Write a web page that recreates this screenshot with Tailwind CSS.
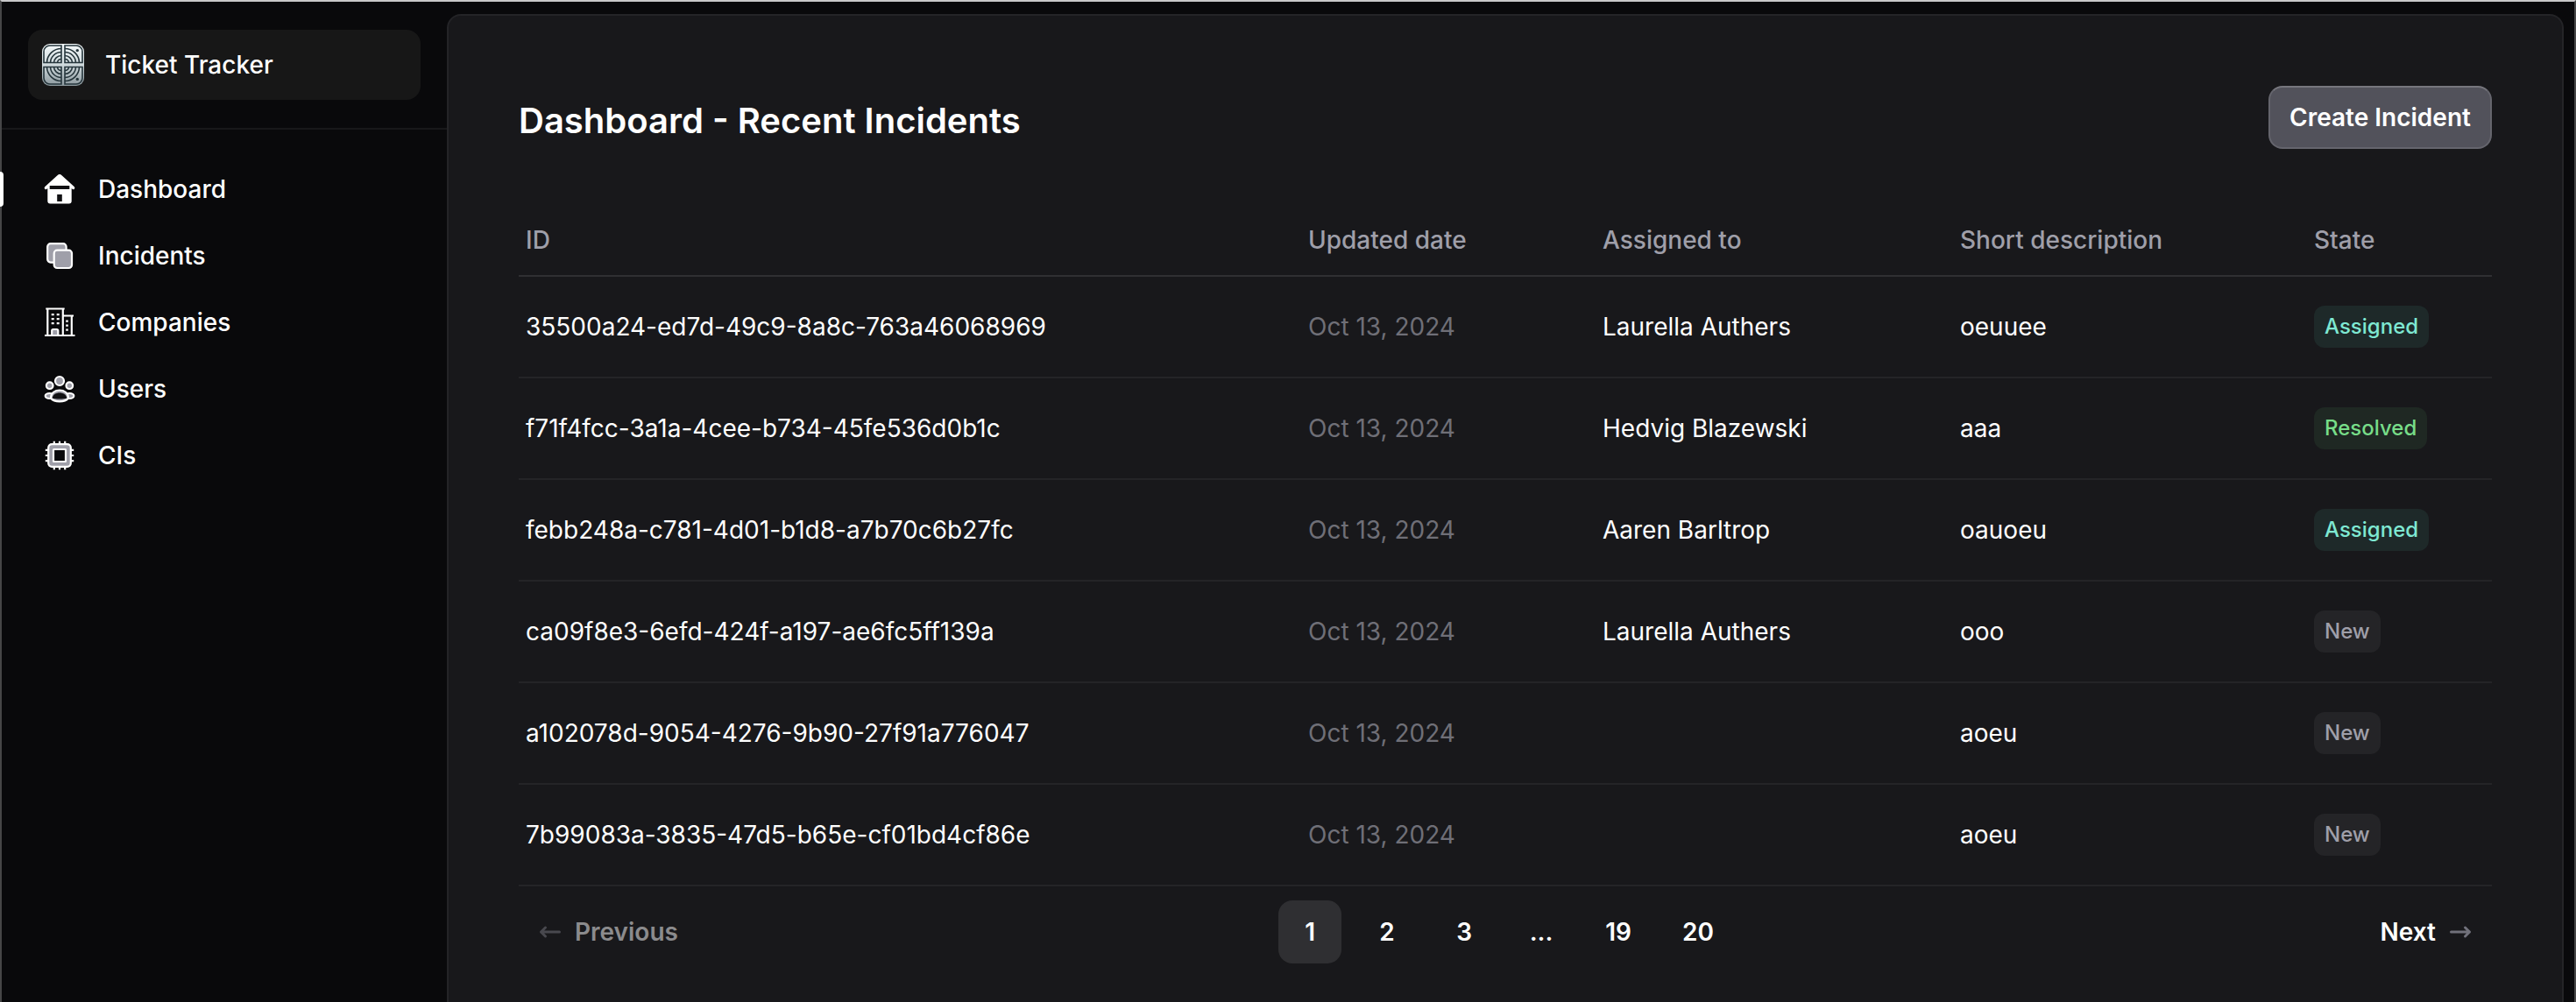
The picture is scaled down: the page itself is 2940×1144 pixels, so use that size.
<!DOCTYPE html>
<html lang="en">
<head>
<meta charset="utf-8">
<title>Ticket Tracker</title>
<script src="https://cdn.jsdelivr.net/npm/@tailwindcss/browser@4"></script>
</head>
<body class="bg-[#09090b]">
<div class="flex h-[1144px] w-[2940px] border-x-2 border-t-2 border-x-[#464647] border-t-[#c8c8c9] bg-[#09090b] font-['Inter',sans-serif] text-[28px] leading-[48px] text-white antialiased">
  <aside class="flex w-[508px] shrink-0 flex-col font-medium">
    <header class="flex h-[146px] items-start border-b-2 border-[#18181a] px-[30px] pt-8">
      <a class="flex h-20 w-full items-center gap-6 rounded-2xl bg-[#171717] px-4">
        <svg class="size-12" viewBox="0 0 48 48" fill="none">
          <defs>
            <linearGradient id="metal" x1="0" y1="0" x2="0" y2="1"><stop offset="0" stop-color="#f4f9fa"/><stop offset=".5" stop-color="#cfd9dc"/><stop offset="1" stop-color="#8b989d"/></linearGradient>
            <g id="quarter" stroke="#26363c" stroke-width="1.6">
              <path d="M22 2H9A7 7 0 0 0 2 9V21.500H22Z"/>
              <path d="M5.500 21.500A16.500 16.500 0 0 1 22 5.500M9.500 21.500A12.500 12.500 0 0 1 22 9.500M13.500 21.500A8.500 8.500 0 0 1 22 13.500M17.500 21.500A4.500 4.500 0 0 1 22 17.500"/>
            </g>
          </defs>
          <rect width="48" height="48" rx="9" fill="url(#metal)"/>
          <use href="#quarter"/>
          <use href="#quarter" transform="matrix(-1 0 0 1 48 0)"/>
          <use href="#quarter" transform="matrix(1 0 0 -1 0 48)"/>
          <use href="#quarter" transform="matrix(-1 0 0 -1 48 48)"/>
          <circle cx="40.300" cy="7.600" r="1.700" fill="#26363c"/><circle cx="40.300" cy="40.400" r="1.700" fill="#26363c"/>
        </svg>
        <span>Ticket Tracker</span>
      </a>
    </header>
    <nav class="flex flex-col pt-[30px]">
      <a class="relative flex h-[76px] items-center gap-6 pl-[46px]">
        <span class="absolute -left-[2px] h-10 w-1 rounded-r-sm bg-white"></span>
        <svg class="size-10" viewBox="0 0 40 40"><path fill="#fff" d="M17.500 4.200a3.500 3.500 0 0 1 5 0L36.800 17.300a1.700 1.700 0 0 1-2.300 2.500L33.700 19V33.500a3 3 0 0 1-3 3H9.300a3 3 0 0 1-3-3V19L5.500 19.800a1.700 1.700 0 0 1-2.300-2.500Z"/><path fill="#111113" d="M8.700 16h22.600v4H8.700zM17.200 26h5.600v8h-5.600z"/></svg>
        <span>Dashboard</span>
      </a>
      <a class="flex h-[76px] items-center gap-6 pl-[46px]">
        <svg class="size-10" viewBox="0 0 40 40" fill="#9f9fa9" stroke="#fff" stroke-width="2.200"><rect x="6.200" y="6.200" width="21.400" height="21.400" rx="3.500"/><rect x="13.700" y="13.700" width="20.300" height="20.300" rx="3.500"/></svg>
        <span>Incidents</span>
      </a>
      <a class="flex h-[76px] items-center gap-6 pl-[46px]">
        <svg class="size-10" viewBox="0 0 40 40" fill="none" stroke="#fff" stroke-width="2.200"><path d="M3 35H37.500M4.300 4.500H25.700M6.300 4.500V35M23.800 4.500V35M24 12.500H36M33.800 12.500V35"/><path fill="#9f9fa9" d="M11.200 34v-4.500a1.500 1.500 0 0 1 1.500-1.500h4.100a1.500 1.500 0 0 1 1.500 1.500V34"/><path d="M10.700 11.200h3M16.700 11.200h3M10.700 16.200h3M16.700 16.200h3M10.700 21.200h3M16.700 21.200h3M27.200 18.700h2.600M27.200 23.700h2.600M27.200 28.700h2.600"/></svg>
        <span>Companies</span>
      </a>
      <a class="flex h-[76px] items-center gap-6 pl-[46px]">
        <svg class="size-10" viewBox="0 0 40 40" fill="#9f9fa9" stroke="#fff" stroke-width="2.200"><circle cx="20" cy="11" r="5"/><circle cx="8.700" cy="16.200" r="3.800"/><circle cx="31.300" cy="16.200" r="3.800"/><ellipse cx="8.500" cy="28" rx="4.800" ry="3"/><ellipse cx="31.500" cy="28" rx="4.800" ry="3"/><path d="M10 30.500c0-12 20-12 20 0-4 5.200-16 5.200-20 0Z"/><path fill="#111113" stroke="none" d="M11.700 30.500c1-8 15.600-8 16.600 0-3 1.300-13.600 1.300-16.600 0Z"/></svg>
        <span>Users</span>
      </a>
      <a class="flex h-[76px] items-center gap-6 pl-[46px]">
        <svg class="size-10" viewBox="0 0 40 40" fill="none" stroke="#fff" stroke-width="2.200"><path d="M13.800 3.700v4M20 3.700v4M26.200 3.700v4M13.800 32.300v4M20 32.300v4M26.200 32.300v4M3.800 13.800h4M3.800 20h4M3.800 26.200h4M32.200 13.800h4M32.200 20h4M32.200 26.200h4"/><rect x="7.200" y="7.200" width="25.600" height="25.600" rx="4" fill="#9f9fa9"/><rect x="13" y="13" width="14" height="14" rx=".5" fill="#09090b"/></svg>
        <span>CIs</span>
      </a>
    </nav>
  </aside>
  <main class="mt-[14px] mr-3 flex min-w-0 grow flex-col rounded-t-2xl border-2 border-b-0 border-[#242427] bg-[#18181b] px-20 pt-20">
    <div class="flex h-[72px] items-end justify-between">
      <h1 class="text-[40px] leading-[64px] font-semibold">Dashboard - Recent Incidents</h1>
      <button class="h-[72px] w-[255px] rounded-2xl border-2 border-[#65656d] border-t-[#77777e] bg-[#52525b] font-semibold leading-[48px] whitespace-nowrap">Create Incident</button>
    </div>
    <section id="incidents" class="mt-16">
      <div class="grid h-[82px] grid-cols-[893px_336px_408px_404px_1fr] border-b-2 border-[#2f2f32] pt-4 font-medium text-[#9f9fa9] *:px-2">
        <span>ID</span><span>Updated date</span><span>Assigned to</span><span>Short description</span><span>State</span>
      </div>
    </section>
    <nav class="mt-4 flex h-[72px] items-center font-semibold">
      <div class="flex grow basis-0 items-center gap-3 pl-5 text-[#8b8b8d]">
        <svg class="size-8" viewBox="0 0 16 16" fill="none" stroke="#48484e" stroke-width="1.500" stroke-linecap="round" stroke-linejoin="round"><path d="M2.750 8H13.250M2.750 8L5.250 5.500M2.750 8L5.250 10.500"/></svg>
        <span>Previous</span>
      </div>
      <div class="flex gap-4 *:flex *:h-[72px] *:min-w-[72px] *:items-center *:justify-center *:rounded-2xl">
        <span class="bg-[#2f2f32]">1</span><span>2</span><span>3</span><span>...</span><span>19</span><span class="px-[21px]">20</span>
      </div>
      <div class="flex grow basis-0 items-center justify-end gap-3 pr-5">
        <span>Next</span>
        <svg class="size-8" viewBox="0 0 16 16" fill="none" stroke="#71717b" stroke-width="1.500" stroke-linecap="round" stroke-linejoin="round"><path d="M13.250 8H2.750M13.250 8L10.750 5.500M13.250 8L10.750 10.500"/></svg>
      </div>
    </nav>
  </main>
</div>
<script>
const tones = {
  Assigned: 'bg-[#1e2929] text-[#7ee8d2]',
  Resolved: 'bg-[#1f2823] text-[#77dd88]',
  New: 'bg-[#242427] text-[#9f9fa9]',
};
const incidents = [
  ['35500a24-ed7d-49c9-8a8c-763a46068969', 'Oct 13, 2024', 'Laurella Authers', 'oeuuee', 'Assigned'],
  ['f71f4fcc-3a1a-4cee-b734-45fe536d0b1c', 'Oct 13, 2024', 'Hedvig Blazewski', 'aaa', 'Resolved'],
  ['febb248a-c781-4d01-b1d8-a7b70c6b27fc', 'Oct 13, 2024', 'Aaren Barltrop', 'oauoeu', 'Assigned'],
  ['ca09f8e3-6efd-424f-a197-ae6fc5ff139a', 'Oct 13, 2024', 'Laurella Authers', 'ooo', 'New'],
  ['a102078d-9054-4276-9b90-27f91a776047', 'Oct 13, 2024', '', 'aoeu', 'New'],
  ['7b99083a-3835-47d5-b65e-cf01bd4cf86e', 'Oct 13, 2024', '', 'aoeu', 'New'],
];
document.getElementById('incidents').insertAdjacentHTML('beforeend', incidents.map(([id, date, person, text, state]) => `
  <div class="grid h-[116px] grid-cols-[893px_336px_408px_404px_1fr] items-center border-b-2 border-[#242427] *:px-2">
    <span>${id}</span><span class="text-[#6f6f77]">${date}</span><span>${person}</span><span>${text}</span>
    <div class="flex"><span class="rounded-xl px-3 py-1 text-[24px] leading-[40px] font-medium ${tones[state]}">${state}</span></div>
  </div>`).join(''));
</script>
</body>
</html>
